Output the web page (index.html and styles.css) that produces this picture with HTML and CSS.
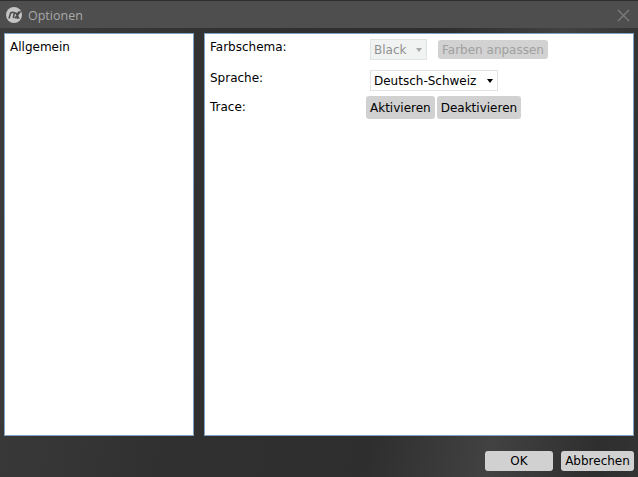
FILE: index.html
```html
<!DOCTYPE html>
<html lang="de">
<head>
<meta charset="utf-8">
<title>Optionen</title>
<link rel="stylesheet" href="styles.css">
</head>
<body>
<div class="window">
  <header class="titlebar">
    <svg class="logo" width="16" height="16" viewBox="0 0 16 16">
      <circle cx="8" cy="8" r="8" fill="#c4c4c4"/>
      <path d="M3 11.5 L4.6 6 L5 6 C6 5 8 5 8.2 6.4 L7.3 11 M8.2 6 L9.8 6 L10.8 7.6 L12.8 5 L14 5 L11.4 8.5 L12.6 11 L11 11 L10.2 9.6 L8.8 11.4" fill="none" stroke="#4a4a4a" stroke-width="1.5"/>
    </svg>
    <span class="title">Optionen</span>
    <svg class="close" width="13" height="13" viewBox="0 0 13 13">
      <path d="M1 1 L12 12 M12 1 L1 12" stroke="#7c7c7c" stroke-width="1.3" fill="none"/>
    </svg>
  </header>
  <main class="panels">
    <nav class="panel side">Allgemein</nav>
    <section class="panel content">
      <div class="row row-scheme">
        <span class="label">Farbschema:</span>
        <div class="fields fields-select">
          <div class="select disabled"><span>Black</span><i class="caret"></i></div>
          <button class="btn btn-disabled">Farben anpassen</button>
        </div>
      </div>
      <div class="row row-lang">
        <span class="label">Sprache:</span>
        <div class="fields fields-select">
          <div class="select"><span>Deutsch-Schweiz</span><i class="caret"></i></div>
        </div>
      </div>
      <div class="row row-trace">
        <span class="label">Trace:</span>
        <div class="fields">
          <button class="btn">Aktivieren</button>
          <button class="btn">Deaktivieren</button>
        </div>
      </div>
    </section>
  </main>
  <footer class="actions">
    <button class="btn btn-ok">OK</button>
    <button class="btn btn-cancel">Abbrechen</button>
  </footer>
</div>
</body>
</html>
```
FILE: styles.css
```css
* { box-sizing: border-box; }
html, body { margin: 0; padding: 0; height: 100%; }
body { font-family: "DejaVu Sans", Verdana, sans-serif; font-size: 12px; color: #000; overflow: hidden; }
.window {
  width: 638px; height: 477px; display: flex; flex-direction: column;
  background: linear-gradient(100deg, #3c3c3c 0%, #303030 35%, #2e2e2e 62%, #424242 79%, #2e2e2e 94%, #333 100%);
}
.titlebar {
  height: 28px; flex: none; display: flex; align-items: center; padding: 1px 8px 0 6px;
  background: #4e4e4e; border-top: 1px solid #2e2e2e;
}
.logo { flex: none; }
.title { margin-left: 6px; color: #a8a8a8; font-family: "Open Sans", sans-serif; font-size: 12.5px; }
.close { margin-left: auto; }
.panels { flex: 1; display: flex; gap: 10px; padding: 5px 4px 0 4px; min-height: 0; }
.panel { background: #fff; border: 1px solid #7fa3c4; height: 403px; }
.side { width: 190px; padding: 6px 5px; flex: none; line-height: 15px; }
.content { flex: 1; padding: 0 5px; }
.row { display: flex; }
.label { width: 156px; flex: none; line-height: 15px; padding-top: 1px; }
.fields { display: flex; gap: 2px; }
.row-scheme { height: 31px; padding-top: 5px; }
.row-lang { height: 30px; padding-top: 5px; }
.row-trace { padding-top: 1px; }
.row-trace .label { padding-top: 4px; }
.fields-select { margin-left: 4px; }
.row-scheme .fields-select { gap: 11px; }
.select {
  width: 128px; height: 21px; display: flex; align-items: center; justify-content: space-between; padding: 0 4px 0 3px;
  background: #fff; border: 1px solid #dfe5e5; color: #000;
}
.select.disabled { width: 57px; background: #f1f3f3; color: #909090; }
.caret { width: 0; height: 0; border-left: 3.5px solid transparent; border-right: 3.5px solid transparent; border-top: 4px solid #000; }
.disabled .caret { border-left-width: 3px; border-right-width: 3px; border-top-color: #a8a8a8; }
.btn {
  font: inherit; color: #000; background: #d1d1d1; border: 0; border-radius: 3px;
  height: 23px; padding: 0 4px; white-space: nowrap;
}
.btn-disabled { width: 110px; height: 19px; margin-top: 1px; color: #a0a0a0; background: #d2d2d2; }
.actions { flex: none; height: 41px; display: flex; justify-content: flex-end; gap: 8px; padding: 15px 4px 0 0; }
.actions .btn { height: 20px; }
.btn-ok { width: 68px; }
.btn-cancel { width: 73px; padding: 0 2px; }
```
